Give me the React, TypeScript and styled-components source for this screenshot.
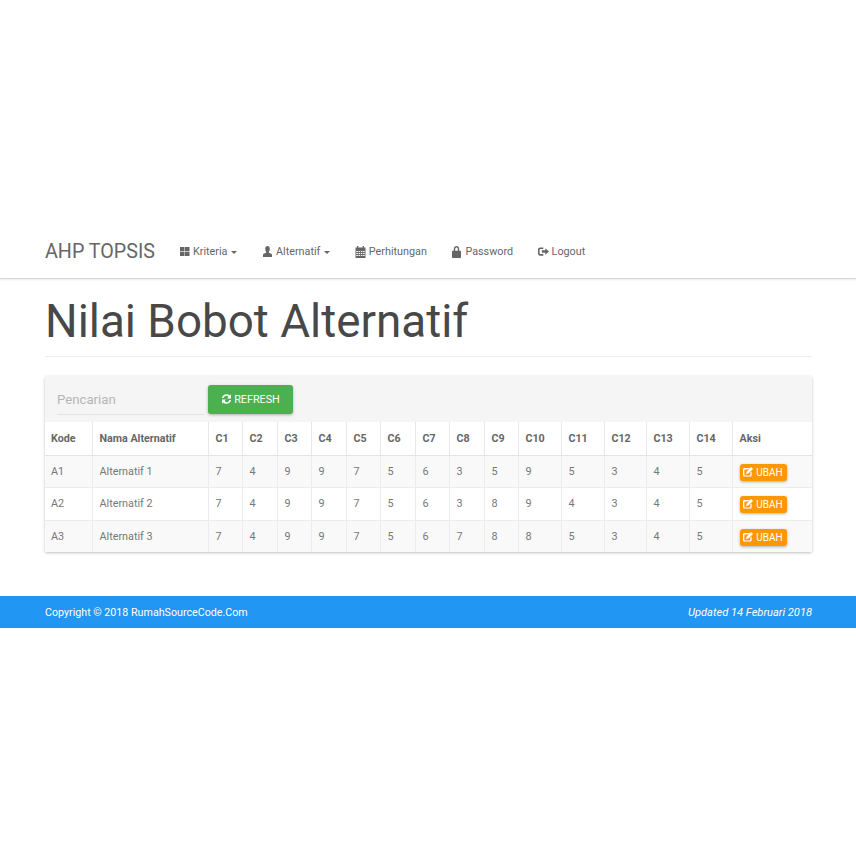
import React from "react";
import styled, { createGlobalStyle } from "styled-components";

const Global = createGlobalStyle`
  html, body { margin: 0; padding: 0; background: #fff; }
  body { font-family: Roboto, "Liberation Sans", sans-serif; color: #666; }
`;

const Page = styled.div`
  width: 856px;
  height: 856px;
  padding-top: 228px;
  box-sizing: border-box;
  overflow: hidden;
`;

const Navbar = styled.nav`
  height: 51px;
  box-sizing: border-box;
  display: flex;
  align-items: center;
  padding: 0 45px 2px;
  background: #fff;
  border-bottom: 1px solid #d5d5d8;
  box-shadow: 0 1px 2px rgba(0, 0, 0, 0.08);
`;

const Brand = styled.div`
  font-size: 19.7px;
  line-height: 24px;
  color: #666;
  width: 134px;
  white-space: nowrap;
`;

const NavList = styled.div`
  display: flex;
  align-items: center;
  gap: 24.5px;
`;

const NavItem = styled.div`
  display: flex;
  align-items: center;
  gap: 3px;
  font-size: 10.8px;
  line-height: 16px;
  color: #666;
  white-space: nowrap;
`;

const Caret = styled.span`
  width: 0;
  height: 0;
  margin-left: 1px;
  border-top: 3.5px solid #666;
  border-left: 3.5px solid transparent;
  border-right: 3.5px solid transparent;
`;

const Content = styled.main`
  padding: 0 44px 0 45px;
`;

const Header = styled.header`
  height: 77px;
  border-bottom: 1px solid #eee;
  margin-bottom: 19px;
`;

const Title = styled.h1`
  margin: 0;
  padding-top: 16px;
  font-size: 45.8px;
  line-height: 54px;
  font-weight: 400;
  color: #484848;
`;

const Panel = styled.section`
  border-radius: 2px;
  background: #fff;
  box-shadow: 0 1px 3px rgba(0, 0, 0, 0.25);
`;

const Toolbar = styled.div`
  height: 46px;
  box-sizing: border-box;
  display: flex;
  align-items: center;
  gap: 4px;
  padding: 0 12px;
  background: #f5f5f5;
`;

const Search = styled.div`
  width: 147px;
  height: 30px;
  margin-top: 2px;
  box-sizing: border-box;
  border-bottom: 1px solid #e3e3e3;
  font-size: 13.2px;
  line-height: 30px;
  color: #b5b5b5;
`;

const RefreshButton = styled.button`
  width: 85px;
  height: 29px;
  padding: 0;
  border: 0;
  border-radius: 3px;
  display: flex;
  align-items: center;
  justify-content: center;
  gap: 2px;
  background: #4caf50;
  color: #fff;
  font: 400 10.8px Roboto, sans-serif;
  box-shadow: 0 1px 3px rgba(0, 0, 0, 0.3);
`;

const Table = styled.table`
  width: 767px;
  table-layout: fixed;
  border-collapse: collapse;
  font-size: 10.8px;
`;

const HeadRow = styled.tr`
  height: 33px;
`;

const HeadCell = styled.th<{ $w: number }>`
  width: ${(p) => p.$w}px;
  padding: 0 6px 0 7px;
  box-sizing: border-box;
  text-align: left;
  font-weight: 700;
  font-size: 10.7px;
  color: #666;
  border-right: 1px solid #e8e8e8;
  border-bottom: 1px solid #e4e4e4;
  white-space: nowrap;
  &:first-child { padding-left: 6px; }
  &:last-child { border-right: 0; }
`;

const Row = styled.tr<{ $odd: boolean; $h: number }>`
  height: ${(p) => p.$h}px;
  background: ${(p) => (p.$odd ? "#f9f9f9" : "#fff")};
`;

const Cell = styled.td`
  padding: 0 6px 0 7px;
  box-sizing: border-box;
  color: #777;
  border-right: 1px solid #ececec;
  border-bottom: 1px solid #ececec;
  white-space: nowrap;
  &:first-child { padding-left: 6px; }
  &:last-child { border-right: 0; }
  tr:last-child > & { border-bottom: 0; }
`;

const EditButton = styled.button`
  width: 47px;
  height: 17px;
  margin-top: 2px;
  padding: 0;
  border: 0;
  border-radius: 3px;
  display: flex;
  align-items: center;
  justify-content: center;
  gap: 3px;
  background: #ff9800;
  color: #fff;
  font: 400 10px Roboto, sans-serif;
  box-shadow: 0 1px 3px rgba(0, 0, 0, 0.3);
`;

const Footer = styled.footer`
  margin-top: 44px;
  height: 32px;
  padding: 0 44px 0 45px;
  display: flex;
  align-items: center;
  justify-content: space-between;
  background: #2196f3;
  color: #fff;
  font-size: 10.7px;
`;

const Updated = styled.em`
  font-style: italic;
  font-size: 11.1px;
`;

const Icon = styled.svg`
  flex: none;
  display: block;
  fill: currentColor;
  margin-top: -1px;
`;

const IconGrid = () => (
  <Icon width="11" height="11" viewBox="0 0 11 11">
    <rect x="1" y="1" width="4.500" height="4.200" />
    <rect x="6" y="1" width="4.500" height="4.200" />
    <rect x="1" y="5.800" width="4.500" height="4.200" />
    <rect x="6" y="5.800" width="4.500" height="4.200" />
  </Icon>
);
const IconUser = () => (
  <Icon width="11" height="11" viewBox="0 0 11 11">
    <path d="M5.500 0C7 0 7.800 1.200 7.800 2.800 7.800 4.200 7.200 5.400 6.800 5.900c-.2.6.1.8.9 1.100 1.300.5 2.300 1 2.300 1.800V11H1V8.800C1 8 2 7.500 3.300 7c.8-.3 1.100-.5.9-1.100C3.800 5.400 3.200 4.200 3.200 2.800 3.200 1.200 4 0 5.500 0z" />
  </Icon>
);
const IconCalendar = () => (
  <Icon width="11" height="12" viewBox="0 0 11 12">
    <path fillRule="evenodd" d="M2 0h1.300v1.500h4.400V0H9v1.500h1.500V12H.5V1.500H2V0zM1.300 5v1h1.600V5H1.300zm2.300 0v1h1.500V5H3.600zm2.300 0v1h1.500V5H5.900zm2.200 0v1h1.600V5H8.100zM1.300 7v1h1.600V7H1.300zm2.300 0v1h1.500V7H3.600zm2.300 0v1h1.500V7H5.900zm2.200 0v1h1.600V7H8.100zM1.300 9v1h1.600V9H1.300zm2.300 0v1h1.500V9H3.600zm2.300 0v1h1.500V9H5.900zm2.200 0v1h1.600V9H8.100z" />
  </Icon>
);
const IconLock = () => (
  <Icon width="11" height="12" viewBox="0 0 11 12">
    <path fillRule="evenodd" d="M2.800 4.800V3C2.800 1.300 4 0 5.500 0s2.700 1.300 2.700 3v1.800h1.100c.4 0 .7.300.7.700v5.800c0 .4-.3.700-.7.700H1.700c-.4 0-.7-.3-.7-.7V5.500c0-.4.300-.7.700-.7h1.100zm1.400 0h2.600V3c0-.8-.6-1.500-1.300-1.500S4.200 2.200 4.200 3v1.800z" />
  </Icon>
);
const IconLogout = () => (
  <Icon width="11" height="11" viewBox="0 0 12 12">
    <path d="M5.800 1.500H2.200C1 1.500 0 2.500 0 3.700v4.600c0 1.200 1 2.200 2.200 2.200h3.600V8.700H2.500c-.4 0-.8-.3-.8-.8V4.100c0-.5.4-.8.800-.8h3.300V1.500z" />
    <path d="M8 2.500L12 6 8 9.500V7.400H4.200V4.600H8V2.500z" />
  </Icon>
);
const IconRefresh = () => (
  <Icon width="11" height="12" viewBox="0 0 12 12">
    <path d="M6 .8c1.400 0 2.600.6 3.600 1.500L10.900.9v4.500H6.500l1.700-1.700C7.600 3 6.800 2.500 6 2.500c-1.500 0-2.800 1-3.200 2.500H1C1.500 2.600 3.500.8 6 .8z" />
    <path d="M6 11.200c-1.400 0-2.600-.6-3.600-1.500L1.100 11.100V6.600h4.400L3.800 8.300c.6.700 1.400 1.200 2.200 1.200 1.500 0 2.800-1 3.200-2.500H11c-.5 2.400-2.500 4.200-5 4.200z" />
  </Icon>
);
const IconEdit = () => (
  <Icon width="10" height="10" viewBox="0 0 11 11">
    <path d="M1.500 1.200h6.200L6.200 2.700H2.200c-.4 0-.7.300-.7.700v5.200c0 .4.300.7.700.7h5.100c.4 0 .7-.3.700-.7V6.200l1.500-1.500v4.300c0 .8-.7 1.500-1.500 1.500h-6.500C.7 10.500 0 9.800 0 9V2.700c0-.8.700-1.500 1.500-1.500z" />
    <path d="M8.900 0L11 2.100 5.900 7.200 3.200 8 4 5.100 8.900 0z" />
  </Icon>
);

const columns: [string, number][] = [
  ["Kode", 47], ["Nama Alternatif", 116], ["C1", 34], ["C2", 35], ["C3", 34], ["C4", 35],
  ["C5", 34], ["C6", 35], ["C7", 34], ["C8", 35], ["C9", 34], ["C10", 43], ["C11", 43],
  ["C12", 42], ["C13", 43], ["C14", 43], ["Aksi", 80],
];

const rows: [string, string, number[], number][] = [
  ["A1", "Alternatif 1", [7, 4, 9, 9, 7, 5, 6, 3, 5, 9, 5, 3, 4, 5], 32],
  ["A2", "Alternatif 2", [7, 4, 9, 9, 7, 5, 6, 3, 8, 9, 4, 3, 4, 5], 33],
  ["A3", "Alternatif 3", [7, 4, 9, 9, 7, 5, 6, 7, 8, 8, 5, 3, 4, 5], 32],
];

export default function App() {
  return (
    <Page>
      <Global />
      <Navbar>
        <Brand>AHP TOPSIS</Brand>
        <NavList>
          <NavItem><IconGrid /> Kriteria <Caret /></NavItem>
          <NavItem><IconUser /> Alternatif <Caret /></NavItem>
          <NavItem><IconCalendar /> Perhitungan</NavItem>
          <NavItem><IconLock /> Password</NavItem>
          <NavItem><IconLogout /> Logout</NavItem>
        </NavList>
      </Navbar>
      <Content>
        <Header>
          <Title>Nilai Bobot Alternatif</Title>
        </Header>
        <Panel>
          <Toolbar>
            <Search>Pencarian</Search>
            <RefreshButton><IconRefresh /> REFRESH</RefreshButton>
          </Toolbar>
          <Table>
            <thead>
              <HeadRow>
                {columns.map(([label, w]) => (
                  <HeadCell key={label} $w={w}>{label}</HeadCell>
                ))}
              </HeadRow>
            </thead>
            <tbody>
              {rows.map(([code, name, vals, h], i) => (
                <Row key={code} $odd={i % 2 === 0} $h={h}>
                  <Cell>{code}</Cell>
                  <Cell>{name}</Cell>
                  {vals.map((v, j) => (
                    <Cell key={j}>{v}</Cell>
                  ))}
                  <Cell>
                    <EditButton><IconEdit /> UBAH</EditButton>
                  </Cell>
                </Row>
              ))}
            </tbody>
          </Table>
        </Panel>
      </Content>
      <Footer>
        <span>Copyright © 2018 RumahSourceCode.Com</span>
        <Updated>Updated 14 Februari 2018</Updated>
      </Footer>
    </Page>
  );
}
